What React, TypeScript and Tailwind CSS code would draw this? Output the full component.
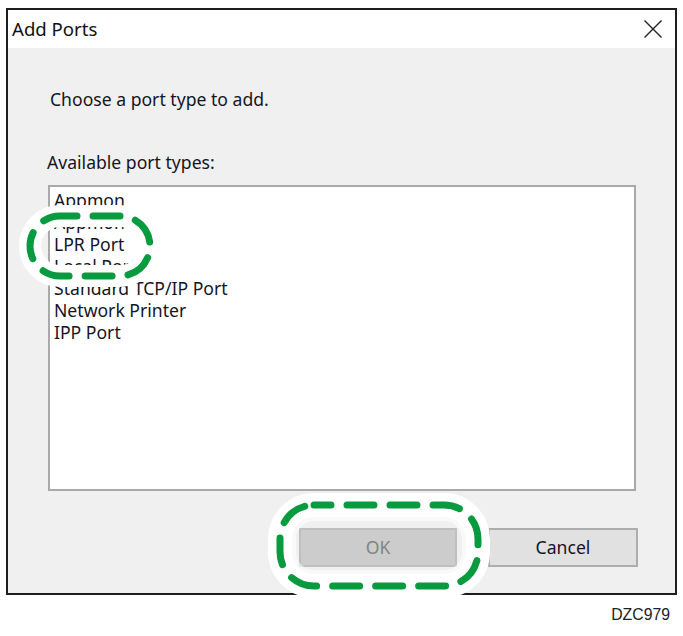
import React from "react";

const items = ["Appmon", "Appmon", "LPR Port", "Local Port", "Standard TCP/IP Port", "Network Printer", "IPP Port"];

function Ring({ left, top, w, h, r, halo, inner }: { left: number; top: number; w: number; h: number; r: number; halo: number; inner: number }) {
  const pad = halo + 2;
  const ins = inner / 2;
  return (
    <svg
      className="absolute pointer-events-none"
      style={{ left: left - pad, top: top - pad }}
      width={w + pad * 2}
      height={h + pad * 2}
    >
      {inner > 0 && (
        <rect
          x={pad + ins}
          y={pad + ins}
          width={w - inner}
          height={h - inner}
          rx={r - ins}
          ry={r - ins}
          fill="none"
          stroke="rgba(255,255,255,0.6)"
          strokeWidth={inner}
        />
      )}
      <rect x={pad} y={pad} width={w} height={h} rx={r} ry={r} fill="none" stroke="#ffffff" strokeWidth={halo * 2} />
      <rect
        x={pad}
        y={pad}
        width={w}
        height={h}
        rx={r}
        ry={r}
        fill="none"
        stroke="#079a3f"
        strokeWidth={7}
        strokeDasharray="27 16"
        strokeLinecap="round"
        strokeDashoffset={10}
      />
    </svg>
  );
}

export default function App() {
  return (
    <div className="relative w-[683px] h-[636px] bg-white overflow-hidden" style={{ fontFamily: '"Noto Sans", "Open Sans", sans-serif' }}>
      <div className="ml-[6px] mt-[8px] w-[671px] h-[587px] border-2 border-[#1e1e1e] flex flex-col">
        <div className="h-[38px] bg-white flex items-center justify-between pl-[4px] pr-[10px]">
          <span className="text-[18.6px] leading-none text-[#111]">Add Ports</span>
          <svg width="20" height="20" viewBox="0 0 20 20" className="mr-[2px]">
            <path d="M1.5 1.5 L18.5 18.5 M18.5 1.5 L1.5 18.5" stroke="#222" strokeWidth="1.4" fill="none" />
          </svg>
        </div>
        <div className="flex-1 bg-[#f0f0f0] flex flex-col">
          <div className="ml-[42px] mt-[40px] text-[17.6px] leading-[22px] text-[#15151f]">Choose a port type to add.</div>
          <div className="ml-[39px] mt-[41px] text-[17.6px] leading-[22px] text-[#15151f]">Available port types:</div>
          <div className="ml-[40px] mt-[12px] w-[588px] h-[306px] bg-white border-2 border-[#a9a9a9] pt-[2px] pl-[4px]">
            {items.map((t, i) => (
              <div key={i} className="text-[17.6px] leading-[22px] text-[#15151f] whitespace-nowrap">
                {t}
              </div>
            ))}
          </div>
          <div className="flex mt-[37px] ml-[291px] gap-[31px]">
            <div className="w-[158px] h-[39px] bg-[#cccccc] border-2 border-[#bfbfbf] flex items-center justify-center text-[17.6px] text-[#838383]">
              OK
            </div>
            <div className="w-[150px] h-[39px] bg-[#e1e1e1] border-2 border-[#adadad] flex items-center justify-center text-[17.6px] text-[#15151f]">
              Cancel
            </div>
          </div>
        </div>
      </div>
      <div className="flex justify-end pr-[13px] mt-[12px] text-[15.8px] leading-none text-[#222]" style={{ fontFamily: '"Liberation Sans", Arial, sans-serif' }}>
        DZC979
      </div>
      <Ring left={30} top={216} w={120} h={60} r={30} halo={11} inner={0} />
      <Ring left={280} top={505} w={198} h={81} r={34} halo={12} inner={16} />
    </div>
  );
}
